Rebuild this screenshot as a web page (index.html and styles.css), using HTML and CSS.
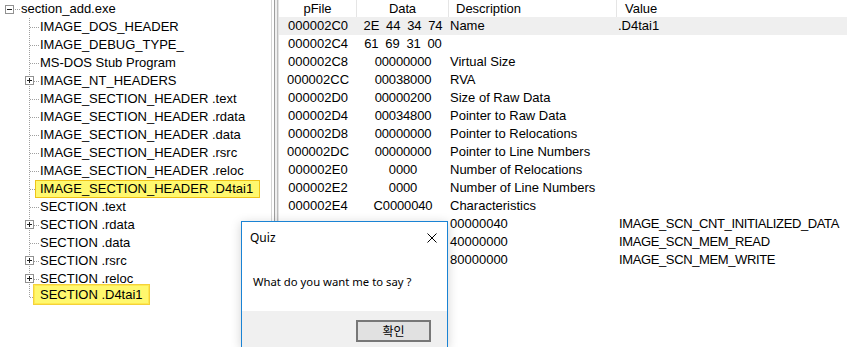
FILE: index.html
```html
<!DOCTYPE html>
<html lang="en">
<head>
  <meta charset="UTF-8">
  <title>section_add.exe</title>
  <link rel="stylesheet" href="styles.css">
</head>
<body>
  <div class="app">
    <!-- tree of the PE structure -->
    <div class="tree">
      <div class="node root">
        <svg class="box" width="9" height="9"><rect x="0.5" y="0.5" width="8" height="8" fill="#fff" stroke="#919191"/><path d="M2 4.5h5" stroke="#1e1e1e"/></svg>
        <span class="stub"></span>
        <span class="label">section_add.exe</span>
      </div>
      <div class="children">
        <div class="node"><span class="twig"></span><span class="label">IMAGE_DOS_HEADER</span></div>
        <div class="node"><span class="twig"></span><span class="label">IMAGE_DEBUG_TYPE_</span></div>
        <div class="node"><span class="twig"></span><span class="label">MS-DOS Stub Program</span></div>
        <div class="node"><span class="twig"></span><svg class="box plus" width="9" height="9"><rect x="0.5" y="0.5" width="8" height="8" fill="#fff" stroke="#919191"/><path d="M2 4.5h5M4.5 2v5" stroke="#1e1e1e"/></svg><span class="label">IMAGE_NT_HEADERS</span></div>
        <div class="node"><span class="twig"></span><span class="label">IMAGE_SECTION_HEADER .text</span></div>
        <div class="node"><span class="twig"></span><span class="label">IMAGE_SECTION_HEADER .rdata</span></div>
        <div class="node"><span class="twig"></span><span class="label">IMAGE_SECTION_HEADER .data</span></div>
        <div class="node"><span class="twig"></span><span class="label">IMAGE_SECTION_HEADER .rsrc</span></div>
        <div class="node"><span class="twig"></span><span class="label">IMAGE_SECTION_HEADER .reloc</span></div>
        <div class="node"><span class="twig"></span><span class="label marked">IMAGE_SECTION_HEADER .D4tai1</span></div>
        <div class="node"><span class="twig"></span><span class="label">SECTION .text</span></div>
        <div class="node"><span class="twig"></span><svg class="box plus" width="9" height="9"><rect x="0.5" y="0.5" width="8" height="8" fill="#fff" stroke="#919191"/><path d="M2 4.5h5M4.5 2v5" stroke="#1e1e1e"/></svg><span class="label">SECTION .rdata</span></div>
        <div class="node"><span class="twig"></span><span class="label">SECTION .data</span></div>
        <div class="node"><span class="twig"></span><svg class="box plus" width="9" height="9"><rect x="0.5" y="0.5" width="8" height="8" fill="#fff" stroke="#919191"/><path d="M2 4.5h5M4.5 2v5" stroke="#1e1e1e"/></svg><span class="label">SECTION .rsrc</span></div>
        <div class="node"><span class="twig"></span><svg class="box plus" width="9" height="9"><rect x="0.5" y="0.5" width="8" height="8" fill="#fff" stroke="#919191"/><path d="M2 4.5h5M4.5 2v5" stroke="#1e1e1e"/></svg><span class="label">SECTION .reloc</span></div>
        <div class="node"><span class="twig"></span><span class="label marked focus">SECTION .D4tai1</span></div>
      </div>
    </div>

    <div class="splitter"></div>

    <!-- field list -->
    <div class="list">
      <div class="row head">
        <div class="c-file">pFile</div>
        <div class="c-data">Data</div>
        <div class="c-desc">Description</div>
        <div class="c-val">Value</div>
      </div>
      <div class="row current">
        <div class="c-file">000002C0</div><div class="c-data">2E  44  34  74</div><div class="c-desc">Name</div><div class="c-val">.D4tai1</div>
      </div>
      <div class="row">
        <div class="c-file">000002C4</div><div class="c-data">61  69  31  00</div><div class="c-desc"></div><div class="c-val"></div>
      </div>
      <div class="row">
        <div class="c-file">000002C8</div><div class="c-data">00000000</div><div class="c-desc">Virtual Size</div><div class="c-val"></div>
      </div>
      <div class="row">
        <div class="c-file">000002CC</div><div class="c-data">00038000</div><div class="c-desc">RVA</div><div class="c-val"></div>
      </div>
      <div class="row">
        <div class="c-file">000002D0</div><div class="c-data">00000200</div><div class="c-desc">Size of Raw Data</div><div class="c-val"></div>
      </div>
      <div class="row">
        <div class="c-file">000002D4</div><div class="c-data">00034800</div><div class="c-desc">Pointer to Raw Data</div><div class="c-val"></div>
      </div>
      <div class="row">
        <div class="c-file">000002D8</div><div class="c-data">00000000</div><div class="c-desc">Pointer to Relocations</div><div class="c-val"></div>
      </div>
      <div class="row">
        <div class="c-file">000002DC</div><div class="c-data">00000000</div><div class="c-desc">Pointer to Line Numbers</div><div class="c-val"></div>
      </div>
      <div class="row">
        <div class="c-file">000002E0</div><div class="c-data">0000</div><div class="c-desc">Number of Relocations</div><div class="c-val"></div>
      </div>
      <div class="row">
        <div class="c-file">000002E2</div><div class="c-data">0000</div><div class="c-desc">Number of Line Numbers</div><div class="c-val"></div>
      </div>
      <div class="row">
        <div class="c-file">000002E4</div><div class="c-data">C0000040</div><div class="c-desc">Characteristics</div><div class="c-val"></div>
      </div>
      <div class="row">
        <div class="c-file"></div><div class="c-data"></div><div class="c-desc">00000040</div><div class="c-val flag">IMAGE_SCN_CNT_INITIALIZED_DATA</div>
      </div>
      <div class="row">
        <div class="c-file"></div><div class="c-data"></div><div class="c-desc">40000000</div><div class="c-val flag">IMAGE_SCN_MEM_READ</div>
      </div>
      <div class="row">
        <div class="c-file"></div><div class="c-data"></div><div class="c-desc">80000000</div><div class="c-val flag">IMAGE_SCN_MEM_WRITE</div>
      </div>
    </div>
  </div>

  <!-- message box (cut by the bottom of the screen) -->
  <div class="msgbox">
    <div class="msg-title">
      <span>Quiz</span>
      <svg class="close" width="10" height="10"><path d="M0.5 0.5l9 9M9.5 0.5l-9 9" stroke="#000" stroke-width="1"/></svg>
    </div>
    <div class="msg-body">What do you want me to say ?</div>
    <div class="msg-foot">
      <button class="ok">확인</button>
    </div>
  </div>
</body>
</html>
```

FILE: styles.css
```css
/* base */
body {
  margin: 0;
  width: 847px;
  height: 347px;
  overflow: hidden;
  position: relative;
  background: #fff;
  font-family: 'Liberation Sans', Arial, sans-serif;
  font-size: 13px;
  color: #000;
}

.app {
  display: flex;
  height: 347px;
}

/* tree on the left */
.tree {
  width: 271px;
  flex: none;
}

.node {
  position: relative;
  display: flex;
  align-items: center;
  height: 18px;
  padding-left: 30px;
  white-space: nowrap;
}

.node.root {
  padding-left: 5px;
}

.root .box {
  flex: none;
}

.stub {
  width: 5px;
  margin-left: 1px;
  border-top: 1px dotted #a0a0a0;
}

.root .label {
  margin-left: 1px;
  padding: 0;
  border: none;
}

.twig {
  width: 9px;
  flex: none;
  border-top: 1px dotted #a0a0a0;
}

.box.plus {
  position: absolute;
  left: 25px;
  top: 4px;
}

.label {
  margin-left: -4px;
  padding: 0 6px 0 4px;
  border: 1px solid transparent;
  line-height: 16px;
}

.label.marked {
  background: #fff86e;
  border-color: #efc318;
}

.label.focus {
  margin-left: -6px;
  margin-top: -5px;
  padding: 2px 6px 1px 6px;
  border-color: #f4d23a;
  box-shadow: inset 0 0 0 1px #ffe94f;
}

.children {
  position: relative;
}

/* vertical line joining the children */
.children::before {
  content: '';
  position: absolute;
  left: 29px;
  top: 0;
  height: 279px;
  border-left: 1px dotted #a0a0a0;
}

/* splitter between panes */
.splitter {
  width: 8px;
  flex: none;
  box-sizing: border-box;
  border-left: 1px solid #d4d4d4;
  border-right: 1px solid #e3e3e3;
  background: linear-gradient(to right, #fff 0, #fff 2px, #9d9d9d 2px, #9d9d9d 3px, #f0f0f0 3px, #f0f0f0 5px, #bdbdbd 5px);
}

/* list on the right */
.list {
  flex: 1;
  min-width: 0;
}

.row {
  display: grid;
  grid-template-columns: 78px 92px 168px 1fr;
  height: 18px;
  line-height: 18px;
  white-space: pre;
}

.row.head {
  height: 17px;
  line-height: 17px;
}

.row.head > div {
  border-right: 1px solid #e5e5e5;
}

.row.head .c-desc {
  padding-left: 7px;
}

.row.head .c-val {
  padding-left: 8px;
  border-right: none;
}

.row.current {
  background: #efefef;
}

.c-file,
.c-data {
  text-align: center;
}

.c-data {
  letter-spacing: -0.15px;
}

.c-desc {
  padding-left: 1px;
}

.c-val {
  padding-left: 1px;
}

.c-val.flag {
  padding-left: 2px;
  letter-spacing: -0.38px;
}

/* message box */
.msgbox {
  position: absolute;
  left: 241px;
  top: 221px;
  width: 207px;
  height: 126px;
  box-sizing: border-box;
  border: 1px solid #1a83d4;
  border-bottom: none;
  background: #fff;
  font-family: 'Noto Sans', 'Open Sans', sans-serif;
  box-shadow: 0 2px 10px rgba(0, 0, 0, 0.18);
}

.msg-title {
  display: flex;
  justify-content: space-between;
  align-items: center;
  height: 30px;
  padding: 0 10px 0 8px;
  font-size: 12px;
}

.close {
  margin-top: 1px;
}

.msg-body {
  height: 59px;
  padding-left: 11px;
  line-height: 1;
  padding-top: 24px;
  box-sizing: border-box;
  font-size: 11.3px;
  color: #000;
}

.msg-foot {
  height: 36px;
  background: #f0f0f0;
  display: flex;
  justify-content: flex-end;
  align-items: flex-start;
  padding: 9px 16px 0 0;
}

.ok {
  width: 75px;
  height: 22px;
  margin: 0;
  padding: 0;
  border: 2px solid #777;
  background: #e1e1e1;
  font-family: 'Noto Sans CJK KR', sans-serif;
  font-size: 12px;
  line-height: 16px;
  color: #000;
}
```
